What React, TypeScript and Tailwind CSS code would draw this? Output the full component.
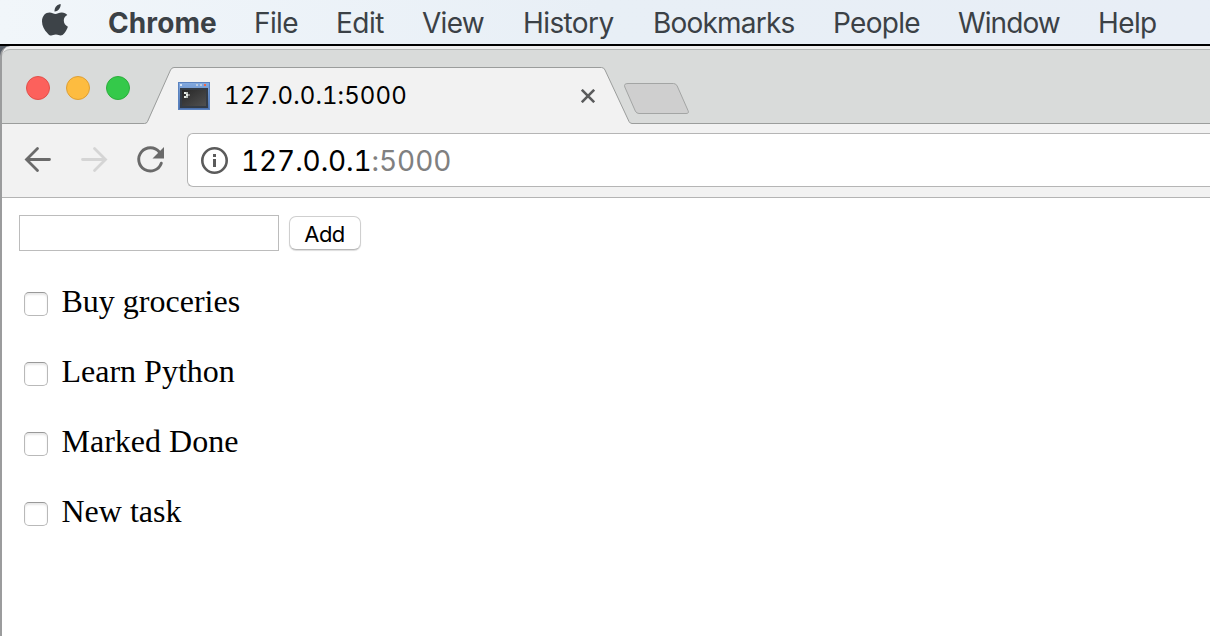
import React from "react";

const menus = [
  { label: "Chrome", cls: "w-[146px] font-bold tracking-[0.1px]" },
  { label: "File", cls: "w-[82px] tracking-[-0.6px]" },
  { label: "Edit", cls: "w-[86px] tracking-[-0.5px]" },
  { label: "View", cls: "w-[101px] tracking-[-0.7px]" },
  { label: "History", cls: "w-[130px] tracking-[-0.6px]" },
  { label: "Bookmarks", cls: "w-[180px] tracking-[-0.8px]" },
  { label: "People", cls: "w-[125px] tracking-[-0.7px]" },
  { label: "Window", cls: "w-[140px] tracking-[-0.9px]" },
  { label: "Help", cls: "tracking-[-0.6px]" },
];

const tasks = ["Buy groceries", "Learn Python", "Marked Done", "New task"];

function AppleLogo() {
  return (
    <svg className="absolute left-[42px] top-[4px]" width="26" height="32" viewBox="0 0 26 32" fill="#3d4348">
      <path d="M18.6 0c.3 2.100-.6 4.100-1.800 5.500-1.200 1.300-2.700 2-4.300 1.900-.2-2 .7-3.900 1.800-5.200C15.500.9 17.200.1 18.600 0z" />
      <path d="M25.300 11c-2.200 1.300-3.500 3.100-3.500 5.600 0 2.900 1.600 5 4.100 6.100-.8 2.400-2.100 4.800-3.800 6.900-1 1.200-2 2-3.500 2-1.700 0-2.300-1-4.700-1s-3.100 1-4.700 1c-1.500 0-2.600-.9-3.700-2.300C2.300 25.900 0 21.600 0 17.400c0-5.700 3.600-9 7.500-9 2.500 0 4.100 1.500 6 1.500 1.800 0 3.400-1.600 6.400-1.500 2.200 0 4.200 1 5.400 2.600z" />
    </svg>
  );
}

function TerminalIcon() {
  return (
    <svg width="32" height="28" viewBox="0 0 32 28" shapeRendering="crispEdges">
      <defs>
        <linearGradient id="frame" x1="0" y1="0" x2="0" y2="1">
          <stop offset="0" stopColor="#82a9df" />
          <stop offset="1" stopColor="#4a6fac" />
        </linearGradient>
        <linearGradient id="screen" x1="0" y1="0" x2="1" y2="1">
          <stop offset="0" stopColor="#282828" />
          <stop offset="1" stopColor="#505050" />
        </linearGradient>
      </defs>
      <rect width="32" height="28" fill="#5a82bf" />
      <rect x="1" y="1" width="30" height="26" fill="url(#frame)" />
      <rect x="2" y="2" width="2" height="2" fill="#d9e5f5" />
      <rect x="18" y="2" width="2" height="2" fill="#b9c9df" />
      <rect x="22" y="2" width="2" height="2" fill="#b9c9df" />
      <rect x="26" y="2" width="2" height="2" fill="#f36445" />
      <rect x="2" y="6" width="28" height="20" fill="#333b45" />
      <rect x="4" y="8" width="24" height="16" fill="url(#screen)" />
      <path d="M6 10h2v2h-2zM8 12h2v2h-2zM6 14h2v2h-2z" fill="#e8eee8" />
      <path d="M8 10h2v2h-2zM8 14h2v2h-2z" fill="#b9beb9" />
      <rect x="10" y="12" width="2" height="2" fill="#858585" />
    </svg>
  );
}

function MenuBar() {
  return (
    <div className="relative flex h-[46px] border-b-2 border-black bg-gradient-to-r from-[#f1f6fa] via-[#e8eff6] to-[#e8eef6] pl-[108px] text-[28px] font-[430] leading-[46px] text-[#3b4146]">
      <AppleLogo />
      {menus.map((m) => (
        <div key={m.label} className={`shrink-0 whitespace-nowrap ${m.cls}`}>{m.label}</div>
      ))}
    </div>
  );
}

function TabStrip() {
  return (
    <div className="relative flex h-[76px] shrink-0 rounded-tl-[8px] border-t border-[#b5b8b7] bg-[#d9dbda]">
      <svg className="absolute left-0 top-[-1px]" width="1208" height="76" viewBox="2 49 1208 76" fill="none">
        <path d="M2 124H145.500Q147 124 147.800 122L170.500 70Q171.800 67.500 174 67.500H601.500Q604 67.500 605 70L629 121.500Q630 123.500 632 123.500H1210V126H2z" fill="#f2f2f2" />
        <path d="M2 123.500H144.500Q146.500 123.500 147.500 121.500L170.500 70Q171.800 67.500 174 67.500H601.500Q604 67.500 605 70L629 121.500Q630 123.500 632 123.500H1210" stroke="#9b9d9c" />
        <path d="M628 83.500H673.500Q676 83.500 677.200 86L688 110.500Q689.500 113.500 686 113.500H639Q636.500 113.500 635.300 111L624.800 87Q623.500 83.500 628 83.500z" fill="#cfcfcf" stroke="#a3a5a4" />
      </svg>
      <div className="relative flex h-[26px] gap-4 pl-[24px] pt-[26px]">
        <div className="h-6 w-6 rounded-full border border-[#e2504a] bg-[#fc615c]" />
        <div className="h-6 w-6 rounded-full border border-[#de9f34] bg-[#fdbc40]" />
        <div className="h-6 w-6 rounded-full border border-[#2cae3c] bg-[#34c94a]" />
      </div>
      <div className="relative ml-[48px] flex pt-[32px]">
        <TerminalIcon />
        <div className="ml-[14px] w-[357px] text-[24px] font-[430] tabular-nums leading-[28px] tracking-[0.1px] text-black [font-kerning:none]">127.0.0.1:5000</div>
        <svg className="mt-[7px]" width="14" height="14" viewBox="0 0 14 14" stroke="#5a5b5c" strokeWidth="2.600">
          <path d="M.8.800l12.400 12.400M13.200.800L.8 13.200" />
        </svg>
      </div>
    </div>
  );
}

function Toolbar() {
  return (
    <div className="flex h-[73px] shrink-0 border-b border-[#b4b4b4] bg-[#f2f2f2] pt-[8px]">
      <div className="flex w-[185px] shrink-0 pl-[22px] pt-[13px]">
        <svg width="28" height="28" viewBox="0 0 28 28" fill="none" stroke="#6a6a6a" strokeWidth="2.800" strokeLinecap="round">
          <path d="M25.500 13.500H3M13.500 2.400L2.500 13.500l11 11.100" />
        </svg>
        <svg className="ml-[28px]" width="28" height="28" viewBox="0 0 28 28" fill="none" stroke="#d5d5d5" strokeWidth="2.800" strokeLinecap="round">
          <path d="M2.500 13.500h22.500M14.500 2.400l11 11.100-11 11.100" />
        </svg>
        <svg className="ml-[28px]" width="30" height="28" viewBox="0 0 30 28" fill="none">
          <path d="M23.300 6A11.600 11.600 0 1 0 25.300 17.200" stroke="#6a6a6a" strokeWidth="2.900" strokeLinecap="round" />
          <path d="M28 1v11.500H16.500z" fill="#6a6a6a" />
        </svg>
      </div>
      <div className="flex h-[54px] grow items-center rounded-l-[6px] border border-r-0 border-[#b5b5b5] bg-white pl-[12px]">
        <svg width="28" height="28" viewBox="0 0 28 28" fill="none">
          <circle cx="14.500" cy="14.500" r="12.200" stroke="#5b5b5b" strokeWidth="2.600" />
          <path d="M13 8h3v3h-3zM13 13h3v8h-3z" fill="#5b5b5b" />
        </svg>
        <div className="ml-[13px] mt-[2px] text-[28px] font-[430] tabular-nums leading-[40px] tracking-[-0.1px] text-black [font-kerning:none]">
          127.0.0.1<span className="text-[#808080]">:5000</span>
        </div>
      </div>
    </div>
  );
}

function Page() {
  return (
    <div className="grow bg-white pl-[17px] pt-[17px]">
      <form className="flex gap-[10px]" onSubmit={(e) => e.preventDefault()}>
        <input className="h-[36px] w-[260px] border border-[#bcbcbc] bg-white px-1 outline-none" />
        <button className="mt-px h-[34px] w-[72px] rounded-[7px] border border-[#cfcfcf] border-b-[#b8b8b8] bg-white pr-px text-[22px] leading-[34px] tracking-[-0.6px] text-black shadow-[0_1px_1px_#dddddd]">
          Add
        </button>
      </form>
      <ul className="mt-[15px] font-['Liberation_Serif',serif] text-[32px] text-black">
        {tasks.map((t) => (
          <li key={t} className="flex h-[70px] items-center">
            <input
              type="checkbox"
              className="ml-[5px] mt-[6px] h-6 w-6 shrink-0 appearance-none rounded-[5px] border border-[#b9b9b9] border-t-[#999999] bg-white shadow-[inset_0_2px_2px_#e8e8e8]"
            />
            <span className="ml-[13.5px] leading-[36px]">{t}</span>
          </li>
        ))}
      </ul>
    </div>
  );
}

export default function App() {
  return (
    <div className="flex h-[636px] w-[1210px] flex-col overflow-hidden bg-[#59616b] font-['Inter',sans-serif]">
      <MenuBar />
      <div className="flex min-h-0 grow flex-col rounded-tl-[10px] border-l-2 border-[#9b9c9d] bg-[#eeeeee] pt-[3px]">
        <TabStrip />
        <Toolbar />
        <Page />
      </div>
    </div>
  );
}
